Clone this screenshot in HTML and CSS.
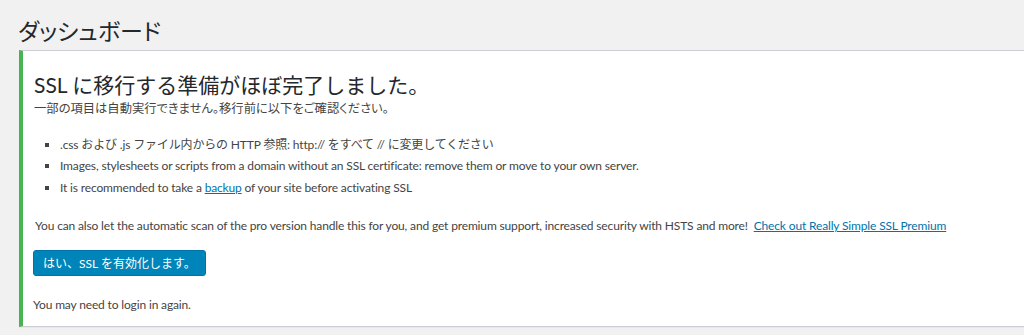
FILE: index.html
```html
<!DOCTYPE html>
<html lang="ja">
<head>
  <meta charset="UTF-8">
  <title>ダッシュボード</title>
  <link rel="stylesheet" href="styles.css">
</head>
<body>
  <div class="wrap">
    <h1 class="page-title">ダッシュボード</h1>
    <div class="notice">
      <h1 class="notice-title">SSL に移行する準備がほぼ完了しました。</h1>
      <p class="notice-sub">一部の項目は自動実行できません。移行前に以下をご確認ください。</p>
      <ul class="checklist">
        <li>.css および .js ファイル内からの HTTP 参照: http:// をすべて // に変更してください</li>
        <li>Images, stylesheets or scripts from a domain without an SSL certificate: remove them or move to your own server.</li>
        <li>It is recommended to take a <a href="#">backup</a> of your site before activating SSL</li>
      </ul>
      <p class="pro-note">You can also let the automatic scan of the pro version handle this for you, and get premium support, increased security with HSTS and more!&nbsp; <a href="#">Check out Really Simple SSL Premium</a></p>
      <button class="button-primary">はい、SSL を有効化します。</button>
      <p class="login-note">You may need to login in again.</p>
    </div>
  </div>
</body>
</html>
```

FILE: styles.css
```css
html, body {
  margin: 0;
  height: 100%;
}

body {
  background: #f1f1f1;
  color: #444;
  font-family: Lato, "Noto Sans CJK JP", sans-serif;
  font-size: 12px;
  letter-spacing: -0.15px;
  line-height: 19.5px;
  font-feature-settings: "palt";
  overflow: hidden;
}

.wrap {
  padding: 17px 0 0 18px;
}

.page-title {
  margin: 0 0 3px;
  font-size: 23px;
  font-weight: 400;
  letter-spacing: 0;
  line-height: 1.3;
  color: #23282d;
}

.notice {
  background: #fff;
  border: 1px solid #ccd0d4;
  border-left: 4px solid #46b450;
  border-right: none;
  box-shadow: 0 1px 1px rgba(0,0,0,0.04);
  margin-left: 1px;
  padding: 1px 10px 12px;
}

.notice-title {
  margin: 19px 0 0 1px;
  font-size: 21px;
  font-weight: 400;
  letter-spacing: 0;
  line-height: 1.3;
  color: #23282d;
  font-feature-settings: normal;
}

.notice-sub {
  margin: 1px 0 0 1px;
  font-size: 12.3px;
  letter-spacing: 0;
}

.checklist {
  list-style: square;
  margin: 16px 0 0;
  padding-left: 27px;
}

.checklist li {
  margin-bottom: 2px;
}

.checklist li:first-child {
  font-feature-settings: normal;
}

a {
  color: #0073aa;
}

.pro-note {
  margin: 19px 0 0;
  padding-left: 2px;
}

.button-primary {
  margin-top: 14px;
  height: 26px;
  padding: 0 9px;
  background: #0085ba;
  border: 1px solid #0073aa;
  border-radius: 3px;
  color: #fff;
  font-family: inherit;
  font-size: 12px;
  letter-spacing: 0;
  cursor: pointer;
}

.login-note {
  margin: 19px 0 0;
}
```
